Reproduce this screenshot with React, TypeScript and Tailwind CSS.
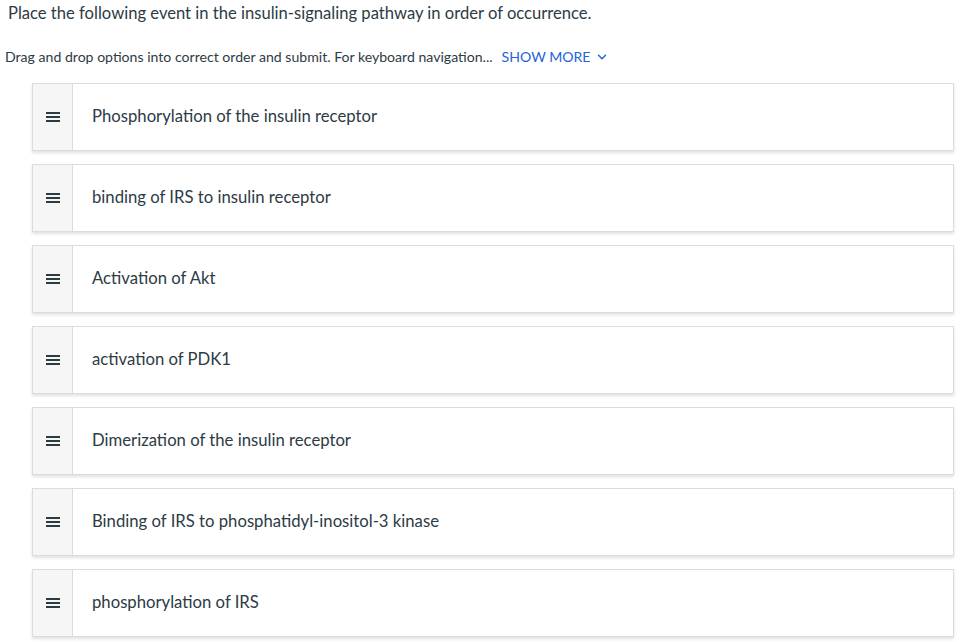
import { ChevronDown } from 'lucide-react';

const items = [
  'Phosphorylation of the insulin receptor',
  'binding of IRS to insulin receptor',
  'Activation of Akt',
  'activation of PDK1',
  'Dimerization of the insulin receptor',
  'Binding of IRS to phosphatidyl-inositol-3 kinase',
  'phosphorylation of IRS',
];

function DragHandle() {
  return (
    <svg width="16" height="14" viewBox="0 0 16 14" className="text-[#2d3b45]">
      <rect x="1" y="2" width="14" height="2" fill="currentColor" />
      <rect x="1" y="6" width="14" height="2" fill="currentColor" />
      <rect x="1" y="10" width="14" height="2" fill="currentColor" />
    </svg>
  );
}

export default function App() {
  return (
    <div className="min-h-screen bg-white text-[#2d3b45]" style={{ fontFamily: 'Lato, "Open Sans", sans-serif' }}>
      <div className="pl-[8px] pt-[2px]">
        <h1 className="text-[16.6px] leading-[22px] text-[#2d3b45]">
          Place the following event in the insulin-signaling pathway in order of occurrence.
        </h1>
        <div className="mt-[24px] flex items-center -ml-[3px] text-[14.1px] leading-[18px] text-[#2d3b45]">
          <span>Drag and drop options into correct order and submit. For keyboard navigation...</span>
          <button className="ml-[9px] flex items-center gap-[4px] text-[#2463d8]">
            SHOW MORE
            <ChevronDown size={14} strokeWidth={2.5} />
          </button>
        </div>
      </div>
      <ul className="mt-[17px] ml-[32px] mr-[17px] flex flex-col gap-[13px]">
        {items.map((t) => (
          <li
            key={t}
            className="flex h-[68px] border border-[#dcdcdf] bg-white shadow-[0_2px_3px_rgba(0,0,0,0.12)]"
          >
            <div className="flex w-[40px] shrink-0 items-center justify-center border-r border-[#dcdcdf] bg-[#f6f6f7]">
              <DragHandle />
            </div>
            <div className="flex items-center pl-[19px] text-[16.7px] text-[#2d3b45]">{t}</div>
          </li>
        ))}
      </ul>
    </div>
  );
}
